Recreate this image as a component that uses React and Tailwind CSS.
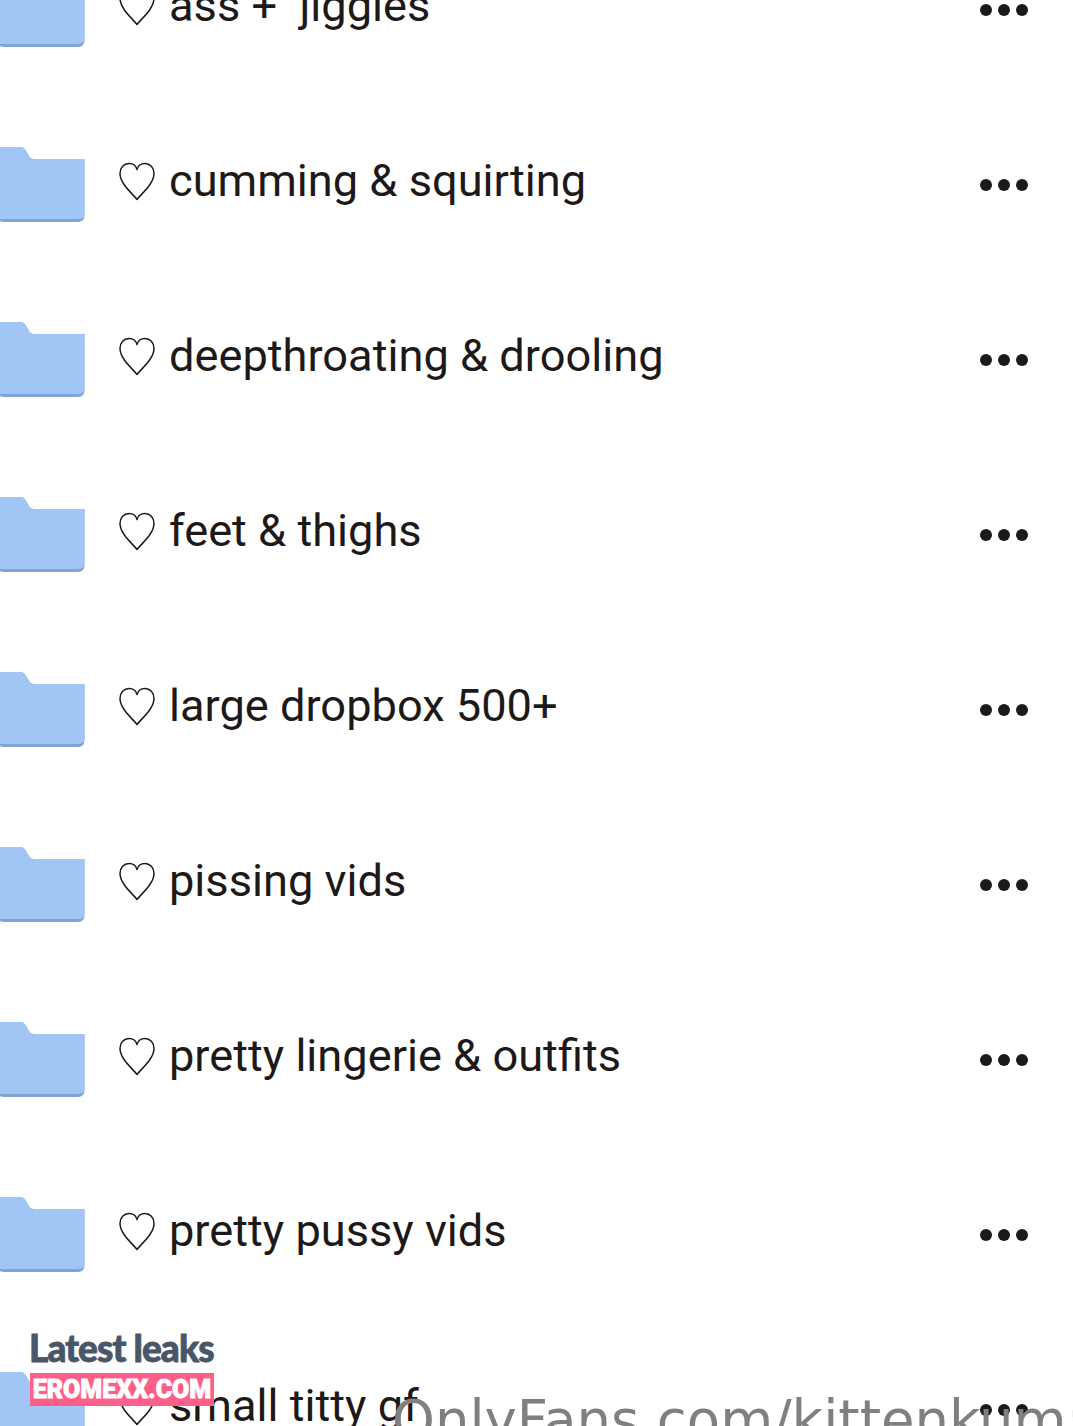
const rows = [
  "ass +  jiggles",
  "cumming & squirting",
  "deepthroating & drooling",
  "feet & thighs",
  "large dropbox 500+",
  "pissing vids",
  "pretty lingerie & outfits",
  "pretty pussy vids",
  "small titty gf",
];

function Folder() {
  return (
    <svg width="85" height="75" viewBox="0 0 85 75" className="shrink-0 block">
      <path d="M-10 6 Q-10 0 -4 0 L20 0 Q24 0 26 4 L29 9 Q30 12 34 12 L84.5 12 L84.5 68 Q84.5 75 78 75 L4 75 Q1 75 -3 73 L-10 73 Z" fill="#7fa5d4" />
      <path d="M-10 6 Q-10 0 -4 0 L20 0 Q24 0 26 4 L29 9 Q30 12 34 12 L84.5 12 L84.5 66 Q84.5 72 78 72 L-10 72 Z" fill="#a1c6f5" />
    </svg>
  );
}

function Heart() {
  return (
    <svg width="38" height="40" viewBox="0 0 38 40" className="shrink-0 block">
      <path d="M19 37.5 C15 32 2 22 2 11.5 C2 5.5 6 1.5 11 1.5 C15 1.5 18 3.5 19 7.5 C20 3.5 23 1.5 27 1.5 C32 1.5 36 5.5 36 11.5 C36 22 23 32 19 37.5 Z" fill="none" stroke="#1e1919" strokeWidth="1.5" strokeLinejoin="round" />
    </svg>
  );
}

function Dots() {
  return (
    <div className="mt-[1px] flex gap-[6px] shrink-0">
      <span className="w-[12px] h-[12px] rounded-full bg-[#1e1919]" />
      <span className="w-[12px] h-[12px] rounded-full bg-[#1e1919]" />
      <span className="w-[12px] h-[12px] rounded-full bg-[#1e1919]" />
    </div>
  );
}

export default function App() {
  return (
    <div className="relative h-[1426px] w-[1073px] overflow-hidden bg-white">
      <div className="mt-[-78px] flex flex-col">
        {rows.map((t) => (
          <div key={t} className="flex h-[175px] shrink-0 items-center pr-[45px]">
            <Folder />
            <div className="ml-[33px] mb-[6px] flex flex-1 items-center">
              <Heart />
              <span className="ml-[13px] mb-[1px] whitespace-pre font-['Roboto',sans-serif] text-[45.2px] leading-[50px] text-[#1e1919]">{t}</span>
            </div>
            <Dots />
          </div>
        ))}
      </div>
      <div className="absolute left-[29px] top-[1327px] font-['Lato',sans-serif] text-[37px] leading-[42px] font-black tracking-[-0.9px] text-[#48566a] [-webkit-text-stroke:0.8px_#48566a]">Latest leaks</div>
      <div className="absolute left-[30px] top-[1373px] flex h-[33px] w-[184px] items-center justify-center bg-[#fd5f88] font-['Roboto',sans-serif] text-[25px] font-black text-white [-webkit-text-stroke:0.8px_#ffffff]">EROMEXX.COM</div>
      <div className="absolute left-[392px] top-[1388px] whitespace-pre font-['DejaVu_Sans',sans-serif] text-[54.5px] leading-[64px] text-[#808080]">OnlyFans.com/kittenkum:</div>
    </div>
  );
}
